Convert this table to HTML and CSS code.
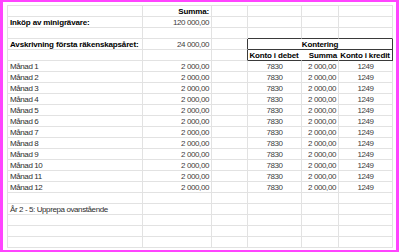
FILE: index.html
```html
<!DOCTYPE html>
<html lang="sv">
<head>
<meta charset="utf-8">
<title>Avskrivning</title>
<link rel="stylesheet" href="styles.css">
</head>
<body>
<div class="frame">
  <div class="sheet">
    <!-- row 1 -->
    <div class="c"></div><div class="c r b">Summa:</div><div class="c"></div><div class="c"></div><div class="c"></div><div class="c"></div>
    <!-- row 2 -->
    <div class="c b">Inköp av minigrävare:</div><div class="c r n">120 000,00</div><div class="c"></div><div class="c"></div><div class="c"></div><div class="c"></div>
    <!-- row 3 -->
    <div class="c"></div><div class="c"></div><div class="c"></div><div class="c above"></div><div class="c above"></div><div class="c above"></div>
    <!-- row 4 -->
    <div class="c b">Avskrivning första räkenskapsåret:</div><div class="c r n">24 000,00</div><div class="c leftof"></div><div class="c b ctr box-head">Kontering</div>
    <!-- row 5 -->
    <div class="c"></div><div class="c"></div><div class="c leftof"></div><div class="c b ctr box-sub inner">Konto i debet</div><div class="c b r box-sub inner">Summa</div><div class="c b ctr box-sub last">Konto i kredit</div>
    <!-- months -->
    <div class="c">Månad 1</div><div class="c r n">2 000,00</div><div class="c"></div><div class="c ctr n">7830</div><div class="c r n">2 000,00</div><div class="c ctr n">1249</div>
    <div class="c">Månad 2</div><div class="c r n">2 000,00</div><div class="c"></div><div class="c ctr n">7830</div><div class="c r n">2 000,00</div><div class="c ctr n">1249</div>
    <div class="c">Månad 3</div><div class="c r n">2 000,00</div><div class="c"></div><div class="c ctr n">7830</div><div class="c r n">2 000,00</div><div class="c ctr n">1249</div>
    <div class="c">Månad 4</div><div class="c r n">2 000,00</div><div class="c"></div><div class="c ctr n">7830</div><div class="c r n">2 000,00</div><div class="c ctr n">1249</div>
    <div class="c">Månad 5</div><div class="c r n">2 000,00</div><div class="c"></div><div class="c ctr n">7830</div><div class="c r n">2 000,00</div><div class="c ctr n">1249</div>
    <div class="c">Månad 6</div><div class="c r n">2 000,00</div><div class="c"></div><div class="c ctr n">7830</div><div class="c r n">2 000,00</div><div class="c ctr n">1249</div>
    <div class="c">Månad 7</div><div class="c r n">2 000,00</div><div class="c"></div><div class="c ctr n">7830</div><div class="c r n">2 000,00</div><div class="c ctr n">1249</div>
    <div class="c">Månad 8</div><div class="c r n">2 000,00</div><div class="c"></div><div class="c ctr n">7830</div><div class="c r n">2 000,00</div><div class="c ctr n">1249</div>
    <div class="c">Månad 9</div><div class="c r n">2 000,00</div><div class="c"></div><div class="c ctr n">7830</div><div class="c r n">2 000,00</div><div class="c ctr n">1249</div>
    <div class="c">Månad 10</div><div class="c r n">2 000,00</div><div class="c"></div><div class="c ctr n">7830</div><div class="c r n">2 000,00</div><div class="c ctr n">1249</div>
    <div class="c">Månad 11</div><div class="c r n">2 000,00</div><div class="c"></div><div class="c ctr n">7830</div><div class="c r n">2 000,00</div><div class="c ctr n">1249</div>
    <div class="c">Månad 12</div><div class="c r n">2 000,00</div><div class="c"></div><div class="c ctr n">7830</div><div class="c r n">2 000,00</div><div class="c ctr n">1249</div>
    <!-- row 18 -->
    <div class="c"></div><div class="c"></div><div class="c"></div><div class="c"></div><div class="c"></div><div class="c"></div>
    <!-- row 19 -->
    <div class="c">År 2 - 5: Upprepa ovanstående</div><div class="c"></div><div class="c"></div><div class="c"></div><div class="c"></div><div class="c"></div>
    <!-- rows 20-22 -->
    <div class="c"></div><div class="c"></div><div class="c"></div><div class="c"></div><div class="c"></div><div class="c"></div>
    <div class="c"></div><div class="c"></div><div class="c"></div><div class="c"></div><div class="c"></div><div class="c"></div>
    <div class="c"></div><div class="c"></div><div class="c"></div><div class="c"></div><div class="c"></div><div class="c"></div>
  </div>
</div>
</body>
</html>
```
FILE: styles.css
```css
* { box-sizing: border-box; }
html, body { margin: 0; padding: 0; background: #fff; }
body { width: 399px; height: 252px; overflow: hidden; }

.frame {
  width: 399px;
  height: 252px;
  border-style: solid;
  border-color: #ff44ff;
  border-width: 2px 3px 2px 3px;
  padding: 3px 0 0 4px;
  background: #fff;
}

.sheet {
  display: grid;
  grid-template-columns: 135px 69px 36px 54px 37px 54px;
  grid-auto-rows: 11px;
  width: 386px;
  border-top: 1px solid #e2e2e2;
  border-left: 1px solid #e2e2e2;
  font-family: "Liberation Sans", Arial, sans-serif;
  font-size: 8px;
  letter-spacing: -0.4px;
  color: #2e2e2e;
}

.c {
  border-right: 1px solid #e2e2e2;
  border-bottom: 1px solid #e2e2e2;
  padding: 1px 2px 0 2px;
  line-height: 9px;
  white-space: nowrap;
}

.r { text-align: right; }
.ctr { text-align: center; }
.n { color: #404040; }
.b { font-weight: bold; font-size: 8px; letter-spacing: -0.15px; color: #000; }

.above { border-bottom-color: #3a3a3a; }
.leftof { border-right-color: #3a3a3a; }

.box-head {
  grid-column: span 3;
  border-right-color: #3a3a3a;
  border-bottom-color: #3a3a3a;
}
.box-sub { border-bottom-color: #3a3a3a; padding-left: 0; padding-right: 1px; }
.box-sub.inner { border-right-color: #fff; }
.box-sub.last { border-right-color: #3a3a3a; }
```
